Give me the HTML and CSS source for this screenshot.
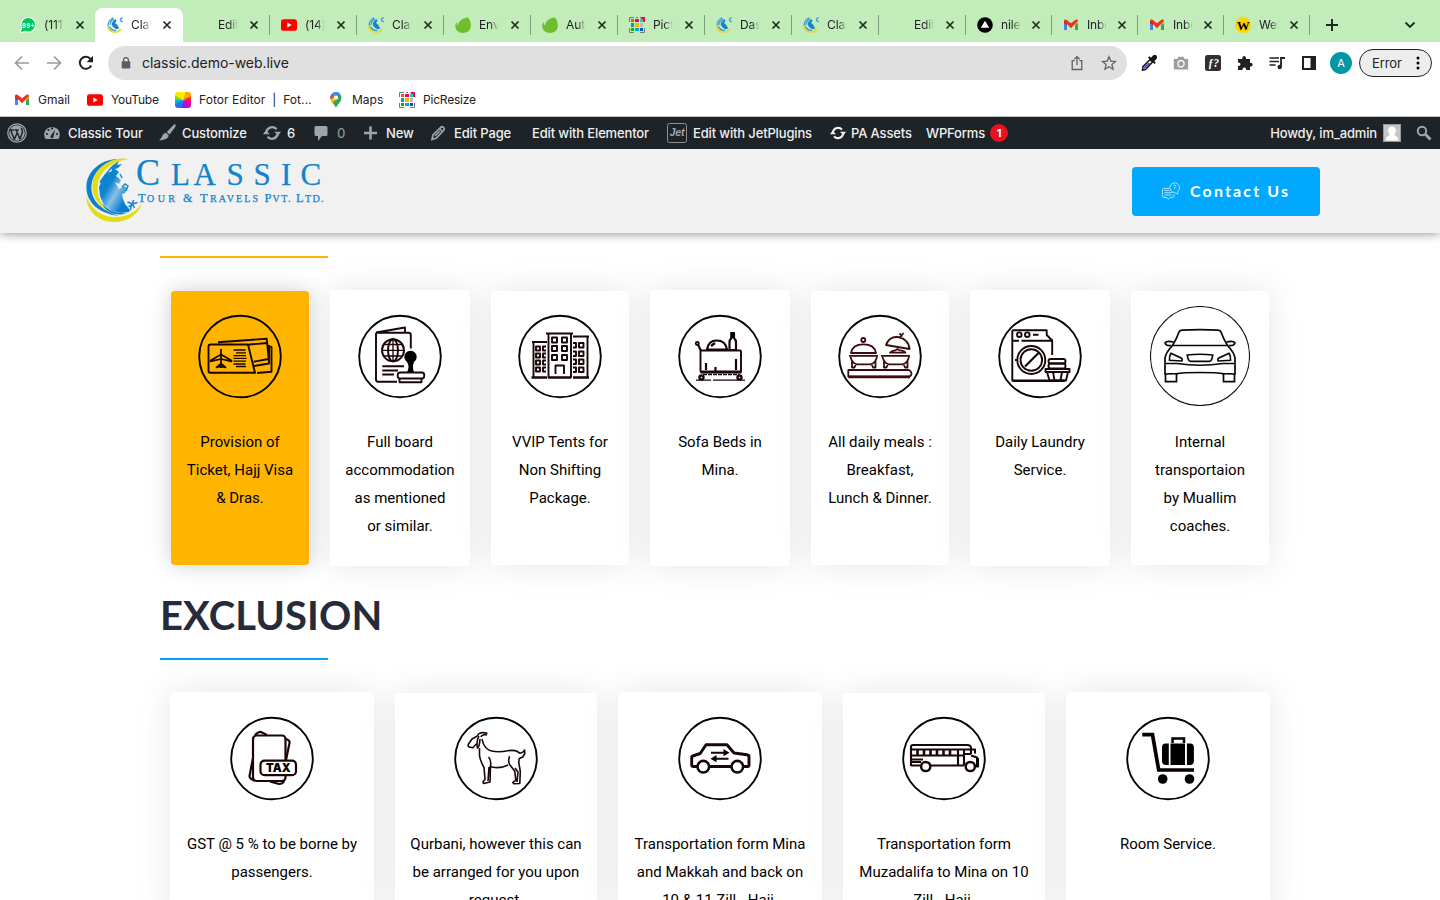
FILE: index.html
```html
<!DOCTYPE html>
<html lang="en">
<head>
<meta charset="utf-8">
<title>Classic Tour &amp; Travels</title>
<link rel="stylesheet" href="styles.css">
</head>
<body>
<svg class="defs" width="0" height="0">
  <defs>
    <linearGradient id="globe" x1="0" y1="0" x2="1" y2="1"><stop offset="0" stop-color="#0a78c8"/><stop offset=".4" stop-color="#0e86d2"/><stop offset=".58" stop-color="#8abfe6"/><stop offset=".8" stop-color="#0a7fd0"/></linearGradient>
    <symbol id="x" viewBox="0 0 10 10"><path d="M1.500 1.500l7 7M8.500 1.500l-7 7" stroke="#1f2a20" stroke-width="1.700"/></symbol>
    <symbol id="fav" viewBox="0 0 16 16"><path d="M6 .8Q.5 4 1.200 9.500M7 1.500Q3 4.500 3 8" fill="none" stroke="#3d9ad8" stroke-width="1.200"/><path d="M.3 8.500Q1.500 15 8 15q4 0 6-3" fill="none" stroke="#e4dc2c" stroke-width="1.800"/><path d="M2.500 9.500Q4 13.500 9 13.300" fill="none" stroke="#2d93d6" stroke-width="1.300"/><path d="M6 4l2.500-2 1 2-1.500 2 2 1.500 2.300 4-3 .8L6 10 4.500 7z" fill="#1684cf"/><path d="M15.800.900c-3-.5-3 3.800 0 3.600" fill="none" stroke="#3a9bd8" stroke-width="1.300"/></symbol>
    <symbol id="yt" viewBox="0 0 16 16"><rect y="2.300" width="16" height="11.500" rx="2.600" fill="#f00"/><path d="M6.300 5.600v4.900L10.700 8z" fill="#fff"/></symbol>
    <symbol id="gm" viewBox="0 0 16 16"><path d="M1 5v8h3V7z" fill="#4285f4"/><path d="M12 7v6h3V5z" fill="#34a853"/><path d="M1 3.800V6l3 2.300V4.700z" fill="#c5221f"/><path d="M15 3.800V6l-3 2.300V4.700z" fill="#fbbc04"/><path d="M1 4c0-1.500 1.500-2 2.500-1.200L8 6.200l4.500-3.400C13.500 2 15 2.500 15 4L8 11.200 1 4z" fill="#ea3323"/></symbol>
    <symbol id="leaf" viewBox="0 0 16 16"><path d="M13 .6c2 2 3.300 6.400 2.700 10C15 14.200 11.500 16 8 16 3 16 .3 12.500.3 9.300c0-2 .7-3.500 1.700-4.300C1.700 7 2.200 8 3 8.500 3 4.500 9 .2 13 .6z" fill="#6fbe2b"/></symbol>
    <symbol id="pic" viewBox="0 0 16 16"><path d="M.5 5V.5H5M5 15.500H.5V11M15.500 11v4.500H11M7 .5h2" fill="none" stroke="#777"/><path d="M2 2h3v3H2z" fill="#ff4d0f"/><path d="M6 2h4v3H6zM11 0h5v5h-1.500z" fill="#f0006c"/><path d="M11 2h3v3h-3z" fill="#3c9"/><path d="M2 6h3v4H2z" fill="#0aa398"/><path d="M6 6h4v4H6z" fill="#ffb400"/><path d="M11 6h3v4h-3z" fill="#bbb"/><path d="M2 11h3v3H2z" fill="#00b30c"/><path d="M6 11h4v3H6z" fill="#00a8e8"/><path d="M11 11h3v3h-3z" fill="#0058b0"/></symbol>
    <symbol id="sync" viewBox="0 0 20 20"><path d="M3.800 8.500A6.500 6.500 0 0 1 15 5.800M16.200 11.500A6.500 6.500 0 0 1 5 14.200" fill="none" stroke="currentColor" stroke-width="2.600"/><path d="M12.500 8.500H20l-3.200 4.500zM7.500 11.500H0L3.200 7z" fill="currentColor"/></symbol>
  </defs>
</svg>

<div class="tabs">
  <div class="tab plain"><svg viewBox="0 0 16 16"><circle cx="8.300" cy="7.700" r="7.800" fill="#fff"/><path d="M0 16l.8-6 5 5z" fill="#fff"/><circle cx="8.300" cy="7.700" r="6.800" fill="#00c853"/><path d="M1 15l1-4.500 3.500 3.500z" fill="#00c853"/><text x="2" y="10.500" textLength="12.500" class="badge99">99+</text></svg><span>(111)</span><svg class="close"><use href="#x"/></svg></div>
  <div class="tab active"><svg><use href="#fav"/></svg><span>Classic</span><svg class="close"><use href="#x"/></svg></div>
  <div class="tab"><svg></svg><span>Edit P</span><svg class="close"><use href="#x"/></svg></div>
  <div class="tab"><svg><use href="#yt"/></svg><span>(14)</span><svg class="close"><use href="#x"/></svg></div>
  <div class="tab"><svg><use href="#fav"/></svg><span>Classic</span><svg class="close"><use href="#x"/></svg></div>
  <div class="tab"><svg><use href="#leaf"/></svg><span>Envato</span><svg class="close"><use href="#x"/></svg></div>
  <div class="tab"><svg><use href="#leaf"/></svg><span>Auto</span><svg class="close"><use href="#x"/></svg></div>
  <div class="tab"><svg><use href="#pic"/></svg><span>Picture</span><svg class="close"><use href="#x"/></svg></div>
  <div class="tab"><svg><use href="#fav"/></svg><span>Dash</span><svg class="close"><use href="#x"/></svg></div>
  <div class="tab"><svg><use href="#fav"/></svg><span>Classic</span><svg class="close"><use href="#x"/></svg></div>
  <div class="tab"><svg></svg><span>Edit P</span><svg class="close"><use href="#x"/></svg></div>
  <div class="tab slim"><svg viewBox="0 0 16 16"><circle cx="8" cy="8" r="7.800"/><path d="M8 3.800l4.200 7H3.800z" fill="#fff"/></svg><span>niles</span><svg class="close"><use href="#x"/></svg></div>
  <div class="tab slim"><svg><use href="#gm"/></svg><span>Inbox</span><svg class="close"><use href="#x"/></svg></div>
  <div class="tab slim"><svg><use href="#gm"/></svg><span>Inbox</span><svg class="close"><use href="#x"/></svg></div>
  <div class="tab slim"><svg viewBox="0 0 16 16"><circle cx="8" cy="8" r="8" fill="#ffd500"/><text x="1.800" y="12.500" textLength="12.400" class="wfav">W</text></svg><span>Web</span><svg class="close"><use href="#x"/></svg></div>
  <svg class="plus" viewBox="0 0 12 12"><path d="M6 0v12M0 6h12" stroke="#1d281e" stroke-width="1.900"/></svg>
  <svg class="chev" viewBox="0 0 12 8"><path d="M1.500 1.500L6 6l4.500-4.500" fill="none" stroke="#1d281e" stroke-width="1.800"/></svg>
</div>

<div class="toolbar">
  <svg class="nav" viewBox="0 0 16 16"><path d="M15 8H2M8 1.500L1.500 8 8 14.500" fill="none" stroke="#9b9b9b" stroke-width="1.700"/></svg>
  <svg class="nav" viewBox="0 0 16 16"><path d="M1 8h13M8 1.500L14.500 8 8 14.500" fill="none" stroke="#9b9b9b" stroke-width="1.700"/></svg>
  <svg class="nav" viewBox="0 0 16 16"><path d="M13.200 10.500A6 6 0 1 1 12.500 4" fill="none" stroke="#1f2023" stroke-width="2"/><path d="M15 .8v6.400H8.600z" fill="#1f2023"/></svg>
  <div class="omnibox">
    <svg class="lock" viewBox="0 0 10 12"><rect x=".7" y="4.200" width="8.600" height="7.300" rx="1" fill="#5a5d61"/><path d="M2.600 5V3a2.400 2.400 0 0 1 4.800 0v2" fill="none" stroke="#5a5d61" stroke-width="1.300"/></svg>
    <span class="url">classic.demo-web.live</span>
    <svg class="obi" viewBox="0 0 16 16"><path d="M5.500 5.700H3.200v8.800h9.600V5.700h-2.300M8 10V2M5.300 4.300L8 1.600l2.700 2.700" fill="none" stroke="#606060" stroke-width="1.300"/></svg>
    <svg class="obi" viewBox="0 0 16 16"><path d="M8 1.800l1.800 4.300 4.700.4-3.600 3.100 1.100 4.600L8 11.700l-4 2.500 1.100-4.600L1.500 6.500l4.700-.4z" fill="none" stroke="#606060" stroke-width="1.300"/></svg>
  </div>
  <div class="exts">
    <svg viewBox="0 0 16 16"><path d="M1.500 15.200l.5-3.500L9 4.500 11.500 7l-7 7.500z" fill="#fff" stroke="#111" stroke-width="1.500"/><path d="M2.500 14l.5-2 4-4h2.500L4 13.500z" fill="#4b52c8"/><path d="M7 2.500L13.500 9l1.300-1.300-1.500-1.500L15.500 4C17 1 15-.8 12 .6L10 2.800 8.300 1.200z" fill="#111"/></svg>
    <svg viewBox="0 0 16 16"><path d="M.8 4h3.400l1.300-2.200h5L11.800 4h3.400v10.500H.8z" fill="#9e9e9e"/><circle cx="8" cy="8.800" r="3.700" fill="#fff"/><circle cx="8" cy="8.800" r="2.500" fill="#9e9e9e"/></svg>
    <svg viewBox="0 0 16 16"><rect width="16" height="16" rx="2.500" fill="#303030"/><text x="3" y="12" textLength="11" lengthAdjust="spacingAndGlyphs" class="fq">ƒ?</text></svg>
    <svg viewBox="0 0 16 16"><path d="M1 4h4.500c-1-4 4-4 3.500 0h4v3.800c3.500-.2 3.500 4 0 3.700V15H9.200c.3-3.500-4-3.500-3.700 0H1v-4c3.300.3 3.300-3.600 0-3.400z" fill="#202124"/></svg>
    <svg viewBox="0 0 16 16"><path d="M.5 3H10M.5 6.500H10M.5 10H6.500" stroke="#202124" stroke-width="1.700"/><path d="M12 12V3h4" fill="none" stroke="#202124" stroke-width="1.800"/><circle cx="10.700" cy="12" r="2.200" fill="#202124"/></svg>
    <svg viewBox="0 0 16 16"><path d="M2 2h12v12H2z" fill="#fff" stroke="#202124" stroke-width="2"/><path d="M9.500 2H14v12H9.500z" fill="#202124"/></svg>
    <span class="avatar">A</span>
  </div>
  <div class="error"><span>Error</span><svg viewBox="0 0 4 14"><circle cx="2" cy="2" r="1.500"/><circle cx="2" cy="7" r="1.500"/><circle cx="2" cy="12" r="1.500"/></svg></div>
</div>

<div class="bookmarks">
  <div><svg><use href="#gm"/></svg><span>Gmail</span></div>
  <div><svg><use href="#yt"/></svg><span class="ytl">YouTube</span></div>
  <div><svg viewBox="0 0 16 16"><clipPath id="fc"><rect width="16" height="16" rx="3"/></clipPath><g clip-path="url(#fc)"><path d="M8 8L-2 4V-2h8z" fill="#ffe600"/><path d="M8 8L5-1h7z" fill="#ffef00"/><path d="M8 8l3-9h6v6z" fill="#ffa800"/><path d="M8 8l9-4v7z" fill="#ff1e3c"/><path d="M8 8l9 2v7h-5z" fill="#e000b8"/><path d="M8 8l5 9H6z" fill="#7a20f0"/><path d="M8 8l-1 9h-8v-5z" fill="#2870f0"/><path d="M8 8l-9 5V8z" fill="#00b4c8"/><path d="M8 8H-1V3z" fill="#70dc00"/></g></svg><span class="fot">Fotor Editor&nbsp; |&nbsp; Fot...</span></div>
  <div><svg viewBox="0 0 16 16"><path d="M8 16c-.5-3-5.500-5.500-5.500-10.500C2.500 2.500 5 0 8 0s5.500 2.500 5.500 5.500C13.500 10.500 8.500 13 8 16z" fill="#34a853"/><path d="M8 0C5 0 2.500 2.500 2.500 5.500L4 9l5-5 3-2.500A5.500 5.500 0 0 0 8 0z" fill="#4285f4"/><path d="M3.600 2L6 5 2.800 7.500A6 6 0 0 1 3.600 2z" fill="#ea4335"/><path d="M10 6.500L4 11 2.900 7.700 6.500 4z" fill="#fbbc04"/><circle cx="8" cy="5.500" r="2" fill="#fff"/></svg><span>Maps</span></div>
  <div><svg><use href="#pic"/></svg><span class="ytl">PicResize</span></div>
</div>

<div class="admin">
  <div><svg viewBox="0 0 20 20"><circle cx="10" cy="10" r="9.200" fill="none" stroke="#a0a5aa" stroke-width="1.300"/><circle cx="10" cy="10" r="7.700" fill="#a0a5aa"/><path d="M3.500 6.800l4 10M9 6.500l4 10M3 7h4M7.500 7h4.200M7.500 16L10.500 9M13 16l2.500-7c.5-2-1.500-2.500-1-4" fill="none" stroke="#1d2327" stroke-width="1.500"/></svg></div>
  <div><svg class="s16" viewBox="0 0 16 16"><path d="M1.500 14A7.800 7.800 0 1 1 14.500 14z" fill="#a0a5aa"/><g fill="#1d2327"><circle cx="3" cy="9" r="1.100"/><circle cx="4.500" cy="5" r="1.100"/><circle cx="8" cy="3.400" r="1.100"/><circle cx="13" cy="9" r="1.100"/><path d="M7 10.500L11 4.500 9.500 11.500a1.500 1.500 0 1 1-2.500-1z"/></g></svg><span>Classic Tour</span></div>
  <div><svg class="s18" viewBox="0 0 18 18"><path d="M17.500.5c.5.500 0 2-1 3.500l-5 6.500-2.700-2.500L15 1.500c1-1 2-1.500 2.500-1zM8 8.700l2.700 2.600C10.500 14 8 16 .8 16.500 4.500 14.500 3.500 9.500 8 8.700z" fill="#a0a5aa"/></svg><span>Customize</span></div>
  <div><svg class="s18"><use href="#sync"/></svg><span>6</span></div>
  <div class="dim"><svg class="s16" viewBox="0 0 16 16"><path d="M3 1h10q1.500 0 1.500 1.500v7Q14.500 11 13 11H9l-4 5v-5H3q-1.500 0-1.500-1.500v-7Q1.500 1 3 1z" fill="#a0a5aa"/></svg><span>0</span></div>
  <div><svg class="s16" viewBox="0 0 16 16"><path d="M8.500 1.500v13M2 8h13" stroke="#a0a5aa" stroke-width="2.600"/></svg><span>New</span></div>
  <div><svg class="s16" viewBox="0 0 16 16"><path d="M2 14.500l1-4.500 7.500-7.500q1.500-1.500 3 0t0 3L6.500 13z" fill="none" stroke="#a0a5aa" stroke-width="1.700"/><path d="M9.500 3.500l3 3M5 11l5-5" stroke="#a0a5aa" stroke-width="1.500"/></svg><span>Edit Page</span></div>
  <div><span>Edit with Elementor</span></div>
  <div><svg viewBox="0 0 20 20"><rect x=".5" y=".5" width="19" height="19" rx="2" fill="none" stroke="#8d9297"/><text x="2.500" y="12.500" textLength="15" lengthAdjust="spacingAndGlyphs" class="jet">Jet</text></svg><span>Edit with JetPlugins</span></div>
  <div class="pa"><svg><use href="#sync"/></svg><span>PA Assets</span></div>
  <div><span>WPForms</span><b>1</b></div>
  <div class="howdy"><span>Howdy, im_admin</span><svg class="s18" viewBox="0 0 18 18"><path d="M0 0h18v18H0z" fill="#c6c6c6"/><path d="M.5.500h17v17H.5z" fill="none" stroke="#999"/><path d="M3 16.500c0-4 1.500-4.500 4-5.500-4-5-1-8.500 2-8.500s6 3.500 2 8.500c2.500 1 4 1.500 4 5.500z" fill="#fff"/></svg><svg class="s16" viewBox="0 0 16 16"><circle cx="6" cy="6" r="4.200" fill="none" stroke="#a0a5aa" stroke-width="2"/><path d="M9 9l5.500 5.500" stroke="#a0a5aa" stroke-width="3"/></svg></div>
</div>

<header>
  <svg class="logo" viewBox="0 0 250 70">
    <path d="M34 3C20 3 5 12 2.500 28 1 44 12 57 35 60 20 55 6 46 7.500 29 9 16 20 7 34 3z" fill="#0c80cf"/>
    <path d="M45 3C30 0 13 9 9 24 6 38 13 49 24 55 15 46 12 36 14.500 25 18 13 30 5 45 3z" fill="#e1dc1c"/>
    <path d="M18 47C24 55 33 58 43 57 33 61 22 57 18 47z" fill="#0c80cf"/>
    <path d="M2 40c5 13 15 21 29 21 13 0 22-6 27-14-3 11-14 19-28 19C15 66 3 56 2 40z" fill="#e0de12"/>
    <path d="M25 13l4-4 6-4-2 4 5-1-4 4-3 1 4 3-3 4 5 4-2 4-4-2 4 7 5-3 3 2-2 5-3 1 1 5 2 5 5 6-1 2-8 1-9-2-8-6-4-9-1-9 2-4-1-2 5-7 7-3-1-3z" fill="url(#globe)"/>
    <path d="M16 27l2-3 1 6-3 3M36 18l2 4M38 31l3-3 3 2-2 5M22 18l5-6" fill="none" stroke="#1686cf" stroke-width="1.400"/>
    <path d="M48.500 48l-5-2M48.500 48l1-4M48.500 48l5-1.500M48.500 48l-4 3M48.500 48l2 4M47.500 48l-1 6" stroke="#1686cf" stroke-width="1.500"/>
    <g class="logotext"><text x="52" y="28.700" font-size="38" textLength="24" lengthAdjust="spacingAndGlyphs">C</text>
    <text x="87 109.500 142.500 169.500 197 216.500" y="28.500" font-size="31">LASSIC</text>
    <text x="54" y="46" font-size="12.500">T</text><text x="63" y="46" font-size="10" textLength="28">OUR</text><text x="99" y="46" font-size="12">&amp;</text><text x="116" y="46" font-size="12.500">T</text><text x="126" y="46" font-size="10" textLength="48">RAVELS</text><text x="180.500" y="46" font-size="12.500">P</text><text x="188.500" y="46" font-size="10" textLength="18">VT.</text><text x="212" y="46" font-size="12.500">L</text><text x="221" y="46" font-size="10" textLength="18.500">TD.</text></g>
  </svg>
  <a class="contact"><svg viewBox="0 0 18 18"><g fill="none" stroke="#b9e8ff" stroke-width=".9"><path d="M7.500 6.500H2q-1.500 0-1.500 1.500v6q0 1.500 1.500 1.500h3l1.500 1.800L8 15.500h2.500q1.500 0 1.500-1.500v-2M2.500 8.500h5M2.500 10.700h8M2.500 13h7"/><path d="M16 9.200A4.800 4.800 0 1 0 12.500 10.500L15.500 12zM11.500 4c.5-1.500 3-1 2.200.5L12.500 6v1"/></g></svg><span>Contact Us</span></a>
</header>

<main>
  <div class="rule gold"></div>
  <div class="row seven">
    <div class="card tight gold-card"><svg viewBox="0 0 100 100"><circle class="ring" cx="50" cy="50.500" r="40.800"/><g class="ln"><path d="M20.500 38.500H58L65 66.800H20.500q-2 0-2-2V40.500q0-2 2-2zM28 36.300L76.700 32.700 78.700 53 63.700 55.700M59 38.500L77.500 37M78 39.500l3.500 1.500V65.700L67 67M64 60l15-2.500v-17"/><path d="M43.500 44h12M46 46.800h10M43.500 49.600h12.500M43.500 52.400h13M43.500 55.200h12.500M43.500 58h12M46 60.500h10" stroke-width="1.300"/><path d="M31 43v19M31 48.500L20.500 54.500v.8L31 53l10.500 2.300v-.8L31 48.500M31 57.500L26.500 61.500 31 60.500l4.500 1z" stroke-width="1.700"/></g></svg><p>Provision of<br>Ticket, Hajj Visa<br>&amp; Dras.</p></div>
    <div class="card"><svg viewBox="0 0 100 100"><circle class="ring" cx="50" cy="50.500" r="40.800"/><g class="ln"><path d="M26 26.700H58.500q2.300 0 2.300 2.300V42.500M26 26.700V73.500q0 2.200 2.200 2.200H47M26 26.500L55 21.500V26"/><circle cx="43" cy="44.300" r="11"/><ellipse cx="43" cy="44.300" rx="5" ry="11"/><path d="M43 33.500v22M32 44.300h22M34 38.500h18M34 50h18" stroke-width="1.300"/><path d="M32.300 60.300H54M32.300 64.500H48M32.300 68.500H44"/><rect x="47.700" y="66.500" width="26.500" height="6" rx="2.500"/><path d="M49.500 73v3.200h22V73"/></g><path d="M57 66q3-5 0-10a6.200 6.200 0 1 1 7 0q-2 5 0 10z"/></svg><p>Full board<br>accommodation<br>as mentioned<br>or similar.</p></div>
    <div class="card tight"><svg viewBox="0 0 100 100"><circle class="ring" cx="50" cy="50.500" r="40.800"/><g class="ln"><path d="M36 27.500h27M38.500 27.500V72M61 27.500V72M22 36h15M23.500 36v36M63 30.500h16M77.500 30.500V72M45.500 68v-8.500h8.500V68"/><path d="M21.500 71.500h15.500M38 71.500h23M63 71.500h16" stroke-width="2.600"/><path d="M42 31.500h5v5h-5zM52 31.500h5v5h-5zM42 40h5v5h-5zM52 40h5v5h-5zM42 49h5v5h-5zM52 49h5v5h-5z"/><path d="M26 40.500h4v4h-4zM26 47.500h4v4h-4zM26 54.500h4v4h-4zM26 61.500h4v4h-4zM36 40.500h-3v4h3M36 47.500h-3v4h3M36 54.500h-3v4h3M36 61.500h-3v4h3M69 37h4.500v4.500H69zM69 45.500h4.500V50H69zM69 53.500h4.500V58H69zM69 61.500h4.500V66H69zM63 37h3v4.500h-3M63 45.500h3V50h-3M63 53.500h3V58h-3M63 61.500h3V66h-3"/></g></svg><p>VVIP Tents for<br>Non Shifting<br>Package.</p></div>
    <div class="card"><svg viewBox="0 0 100 100"><circle class="ring" cx="50" cy="50.500" r="40.800"/><g class="ln"><rect x="30.500" y="44.500" width="40.500" height="21.500" rx="1"/><path d="M31 45L28 38.500M37 43.500C38 37 42 34.500 46.700 34.500S56 37 57 43.500zM41 40l4-3M61.500 27v5q-2 2-2 4v8h6.500v-8q0-2-2-4v-5z" stroke-width="2.200"/><circle cx="27.300" cy="37.500" r="1.500"/><path d="M30.500 66h41" stroke-width="3"/><path d="M33 68.500h36" stroke-dasharray="4 1" stroke-width="1.600"/><path d="M36 57v7M45.500 61v4M66 53v11" stroke-width="2.200"/><circle cx="31.500" cy="71.500" r="2" stroke-width="2.400"/><circle cx="69.500" cy="71.500" r="2" stroke-width="2.400"/><path d="M26 74.200h15M43 74.200h32" stroke-width="1.200"/></g><path d="M60.500 26h4v6h-4z"/></svg><p>Sofa Beds in<br>Mina.</p></div>
    <div class="card tight"><svg viewBox="0 0 100 100"><circle class="ring" cx="50" cy="50.500" r="40.800"/><g class="ln maroon"><circle cx="33.300" cy="34" r="2"/><path d="M21 47C22 41 27 38.300 33.300 38.300S45 41 46 47zM56 39C60 26 79 30 79.500 43zM70 31l2-1.500M69.500 27.500l2 2 2-2.500M60 46.700q2-2 6-2.500 1-2 3 0 5 .5 6.500 2.500z"/><path d="M19 49.800H48M51 49.800H80M20.500 51q2 7 7 7.300H40q5-.3 7-7.300M52.500 51q2 7 7 7.300H72q5-.3 7-7.300M22 55.500V61.500h2.500L26 58M45.500 55.500V61.500H43L41.500 58M54 55.500V61.500h2.500L58 58M77.500 55.500V61.500H75L73.500 58"/><path d="M18.300 64H79q2.500 1.500 2.500 3.700T79 70.500H18.300z"/><path d="M18.300 71H80" stroke-width="2.600"/></g></svg><p>All daily meals :<br>Breakfast,<br>Lunch &amp; Dinner.</p></div>
    <div class="card"><svg viewBox="0 0 100 100"><circle class="ring" cx="50" cy="50.500" r="40.800"/><g class="ln"><path d="M22.300 24.200H56.700V29l5.500 5.500V49M22.300 24.200V75M22.300 34.700H29M31.500 34.700H62M43 28.700h5.500"/><circle cx="29.300" cy="28.700" r="2.300"/><circle cx="37.300" cy="28.700" r="2.300"/><path d="M22.300 74.700H75" stroke-width="2.600"/><circle cx="41.300" cy="54" r="14"/><circle cx="41.300" cy="54" r="10.800"/><path d="M35 60.500l14-14M27 54h-2" stroke-width="2.200"/><rect x="58.500" y="53" width="17" height="4.500" rx="2.200"/><rect x="58.500" y="57.500" width="17" height="5" rx="2.200"/><path d="M55.500 63H79.500V66H55.500zM57 66l2.500 8.500H76L78 66M63 66l1.500 8.500M72 66l-1.500 8.500"/></g></svg><p>Daily Laundry<br>Service.</p></div>
    <div class="card tight"><svg viewBox="0 0 100 100"><circle cx="50" cy="50" r="49.500" fill="none" stroke="#111" stroke-width="1.100"/><g fill="none" stroke="#080808" stroke-width="1.700"><path d="M22.500 39.500Q27 32 29 26q.5-1.500 3-1.800Q50 23 68 24.200q2.500.3 3 1.800 2 6 6.500 13.500zM22.500 39.500Q15.500 47 15 52V68l12-.3Q32 66.500 50 66.500t23 1.200l12 .3V52Q84.500 47 77.500 39.500M15 57.500l12 0Q50 61 73 57.500l12 0M37.300 49q12.700-1.500 25.400 0-.5 5.500-3 6.300H40.300Q37.800 54.500 37.300 49zM21 47.300l10.500 5q1.500 2 0 2.700L19.500 54.300q-.5-4 1.500-7zM79 47.300l-10.500 5q-1.500 2 0 2.700L80.500 54.300q.5-4-1.500-7z"/><path d="M23.500 36q-7-1.500-8.500 1 1.500 3.500 6.500 2.500M76.500 36q7-1.500 8.500 1-1.500 3.500-6.500 2.500M15.500 68v7.700H26.500V67.700M84.500 68v7.700H73.500V67.700"/></g></svg><p>Internal<br>transportaion<br>by Muallim<br>coaches.</p></div>
  </div>
  <h2>EXCLUSION</h2>
  <div class="rule blue"></div>
  <div class="row five">
    <div class="card"><svg viewBox="0 0 100 100"><circle class="ring" cx="50" cy="50.500" r="40.800"/><g class="ln"><path d="M33 27q4-4.500 7-2.500l5 2.500M64 31q4 1 3.500 4L64 52M31 50l-3.500 18q0 3 5 4.500M48 73.500l9 2.500q4 0 5-3" stroke-width="2.200"/><rect x="31" y="27.500" width="32.500" height="45.500" rx="3.500" stroke-width="2.200"/><rect x="38.500" y="52.700" width="35.500" height="14.500" rx="4" fill="#fff" stroke-width="2.200"/></g><text x="44" y="64.300" textLength="24.500" lengthAdjust="spacingAndGlyphs" class="tax">TAX</text></svg><p>GST @ 5 % to be borne by<br>passengers.</p></div>
    <div class="card tight"><svg viewBox="0 0 100 100"><circle class="ring" cx="50" cy="50.500" r="40.800"/><g class="ln thin"><path d="M41.500 25.500q-6-2-9 .5-1 2-2 2.500L26 31l-3.500 5q-1 2.500 1 3l3.500.8q3-4 4.500-4.300M41 27q-5-1-6 2M33 28q-3 5-1.500 12 2-1 2.500-9M36 31l1.500 5q3 6 8 7 8 1.500 16-.3 6-.7 9 .3l3.500 2.200q3-.2 4.500-3.200l.3 3.500-2 3.500-3.500 1.500q-1 4 0 7l1 6-.5 12-6 .3-1-1.500 3-2-1-9-5-6.500q-2-3-.3-8.500M62 57q-8 4-16 2l-2.500-1M42.500 49q3 3 2 9l-.5 16-6.500 1.500-.5-2 2-2-1-12q-4-7-4.500-12L33.500 40M43 59l-1 14M69 60l3 4-1 10"/></g></svg><p>Qurbani, however this can<br>be arranged for you upon<br>request.</p></div>
    <div class="card"><svg viewBox="0 0 100 100"><circle class="ring" cx="50" cy="50.500" r="40.800"/><g class="ln"><path d="M27 58.500h-3.500q-1.800 0-1.800-1.800V49q0-.7 1-1l7.500-2.500L36 36.700H57L64 45l13 1.800q2 .3 2 2V57q0 1.500-1.500 1.500H74M39.500 58.500h21.500" stroke-width="2.900"/><circle cx="33.300" cy="58.700" r="5.800" stroke-width="2.600"/><circle cx="67.300" cy="58.700" r="5.800" stroke-width="2.600"/><path d="M41 44.700h13M45.500 50.700h13"/></g><path d="M53.500 41l6 3.700-6 3.500zM46.500 47l-6 3.700 6 3.500z"/></svg><p>Transportation form Mina<br>and Makkah and back on<br>10 &amp; 11 Zill - Hajj.</p></div>
    <div class="card tight"><svg viewBox="0 0 100 100"><circle class="ring" cx="50" cy="50.500" r="40.800"/><g class="ln"><path d="M17 58V39q0-2 2-2H73q4 0 4 3v6M17 41.500H81v4M17 47.500H69M77 46h-8M17 57.500h9M37 57.500H70M64 42v15.500M70 42v15.500M77 47.500l6 2 1 3v6h-3M17 51.500h12M17 54h10" stroke-width="2.100"/><path d="M23.500 42v5M30 42v5M36.500 42v5M43 42v5M49.500 42v5M56 42v5" stroke-width="2.600"/><circle cx="31.700" cy="58.500" r="4.600" fill="#fff" stroke-width="2.500"/><circle cx="76.300" cy="58.500" r="4.600" fill="#fff" stroke-width="2.500"/></g><path d="M82 50h3v9h-3z"/></svg><p>Transportation form<br>Muzadalifa to Mina on 10<br>Zill - Hajj.</p></div>
    <div class="card"><svg viewBox="0 0 100 100"><circle class="ring" cx="50" cy="50.500" r="40.800"/><path d="M24.300 26.700H34.500L40.700 62H76" fill="none" stroke="#0a0002" stroke-width="3.700"/><path d="M47 35.500h3.800V57H47q-3-.5-3-4V39.500q0-3.500 3-4zM52.500 35.500h14.500V57H52.500zM68.900 35.500H73q2.900.5 2.900 4V53q0 3.500-2.900 4h-4.100z"/><path d="M54.500 35v-4.500h11.500V35" fill="none" stroke="#0a0002" stroke-width="2.500"/><circle cx="44.700" cy="71" r="4.800"/><circle cx="71.500" cy="71" r="4.800"/></svg><p>Room Service.</p></div>
  </div>
</main>
</body>
</html>
```
FILE: styles.css
```css
* { box-sizing: border-box; }
body { margin: 0; width: 1440px; height: 900px; overflow: hidden; background: #fff; font-family: Inter, "Liberation Sans", sans-serif; color: #202124; }
svg { display: block; flex: none; }
.defs { position: absolute; }

.tabs { display: flex; height: 42px; padding: 8px 0 0 9px; background: #c3ecbb; }
.tab { display: flex; align-items: center; width: 87px; height: 34px; padding-left: 11px; background: linear-gradient(#7f9f7a, #7f9f7a) 86px 7px / 1px 20px no-repeat; }
.tab.slim { width: 86px; background-position: 85px 7px; }
.tab.plain { background: none; }
.tab.active { width: 88px; margin-left: -1px; padding-left: 12px; background: #fff; border-radius: 8px 8px 0 0; }
.tab svg { width: 16px; height: 16px; }
.tab span { width: 20px; margin: -2px 11px 0 8px; overflow: hidden; white-space: nowrap; font-size: 12px; letter-spacing: -0.1px; -webkit-mask-image: linear-gradient(90deg, #000 55%, transparent); mask-image: linear-gradient(90deg, #000 55%, transparent); }
.tab .close { width: 10px; height: 10px; }
.tab.slim .close { margin-left: -1px; }
.badge99 { font: 700 6.5px "Liberation Sans", sans-serif; fill: #fff; }
.wfav { font: 700 13px "Liberation Serif", serif; }
.plus { width: 12px; height: 12px; margin: 11px 0 0 16px; }
.chev { width: 12px; height: 8px; margin: 13px 0 0 66px; }

.toolbar { display: flex; align-items: center; height: 42px; padding: 0 8px 0 14px; }
.nav { width: 16px; height: 16px; margin-right: 16px; }
.omnibox { display: flex; align-items: center; width: 1019px; height: 34px; margin-left: -2px; padding: 0 10px 0 13px; border-radius: 17px; background: #e0e0e0; }
.lock { width: 10px; height: 12px; }
.url { flex: 1; margin: -2px 0 0 11px; font-size: 14px; letter-spacing: -0.05px; }
.obi { width: 16px; height: 16px; margin-left: 16px; }
.exts { display: flex; align-items: center; gap: 16px; margin-left: 14px; }
.exts svg { width: 16px; height: 16px; }
.fq { font: italic 700 13px "Liberation Serif", serif; fill: #fff; }
.avatar { width: 22px; height: 22px; margin-left: -3px; border-radius: 50%; background: #0097a7; color: #fff; font-size: 11px; line-height: 22px; text-align: center; }
.error { display: flex; align-items: center; justify-content: space-between; width: 73px; height: 28px; margin-left: 7px; padding: 0 11px 0 12px; border: 1px solid #202124; border-radius: 14px; background: #ededed; font-size: 13px; letter-spacing: -0.1px; }
.error svg { width: 4px; height: 14px; }

.bookmarks { display: grid; grid-template-columns: 73px 88px 153px 71px 100px; height: 33px; padding-left: 14px; border-bottom: 1px solid #c4c4c4; font-size: 12px; }
.bookmarks div { display: flex; align-items: center; gap: 8px; white-space: nowrap; }
.bookmarks svg { width: 16px; height: 16px; }
.bookmarks span { margin-top: -2px; }
.ytl { letter-spacing: -0.2px; }
.fot { letter-spacing: 0.06px; }

.admin { display: grid; grid-template-columns: 37px 114px 105px 50px 49px 68px 102px 135px 163px 96px 200px 1fr; height: 32px; padding-left: 7px; background: #1d2327; color: #f0f0f1; font-size: 13px; font-weight: 500; letter-spacing: -0.15px; }
.admin div { display: flex; align-items: center; gap: 6px; white-space: nowrap; }
.admin svg { width: 20px; height: 20px; color: #a0a5aa; }
.admin .s16 { width: 16px; height: 16px; margin-right: 2px; }
.admin .s18 { width: 18px; height: 18px; }
.admin .pa svg { width: 16px; height: 16px; color: #f0f0f1; }
.admin .pa { gap: 5px; }
.admin .dim { color: #8a8f94; }
.admin b { width: 18px; height: 18px; margin-left: -1px; border-radius: 9px; background: #e8111f; color: #fff; font-size: 11px; line-height: 18px; text-align: center; }
.admin .howdy { justify-content: flex-end; padding-right: 6px; }
.admin .howdy .s16 { margin-left: 9px; }
.jet { font: italic 700 10px "Liberation Sans", sans-serif; fill: #a0a5aa; }

header { position: relative; z-index: 2; display: flex; justify-content: space-between; height: 84px; padding: 7px 120px 0 84px; background: #f1f1f1; box-shadow: 0 0 10px rgba(0, 0, 0, .5); clip-path: inset(0 0 -30px 0); }
.logo { width: 250px; height: 70px; }
.logotext { font-family: "Liberation Serif", serif; fill: #1182cf; stroke: #1182cf; stroke-width: .25; }
.contact { display: flex; align-items: center; width: 188px; height: 49px; margin-top: 11px; padding-left: 30px; border-radius: 4px; background: #00a8ff; color: #fff; font: 700 16px Lato, sans-serif; letter-spacing: 2.15px; }
.contact svg { width: 18px; height: 18px; margin-right: 10px; margin-top: -2px; }
.contact span { margin-top: -3px; white-space: nowrap; }

main { width: 1120px; margin: 0 auto; padding-top: 23px; }
.rule { width: 168px; height: 2px; }
.gold { background: #ffb400; }
.blue { background: #00a3f5; }
.row { display: grid; gap: 20px; padding: 0 10px; margin-top: 32px; }
.seven { grid-template-columns: repeat(7, 140px); height: 276px; }
.five { grid-template-columns: repeat(5, 204px); height: 208px; }
.card { padding-top: 16px; border-radius: 4px; background: #fff; box-shadow: 0 0 35px rgba(0, 0, 0, .1); text-align: center; }
.card.tight { margin: 1px; padding-top: 15px; }
.card.gold-card { background: #ffb400; box-shadow: 0 0 22px rgba(0, 0, 0, .2); }
.card svg { width: 100px; height: 100px; margin: 0 auto; }
.card p { margin: 22px 0 0; font: 15px/28px Roboto, sans-serif; letter-spacing: 0; color: #000; white-space: nowrap; }
.ring { fill: none; stroke: #050505; stroke-width: 1.9; }
.ln { fill: none; stroke: #1a0508; stroke-width: 1.9; stroke-linejoin: round; }
.ln.thin { stroke-width: 1.6; }
.ln.maroon { stroke: #3a0c12; stroke-width: 1.8; }
.tax { font: 900 12px Inter, sans-serif; }
h2 { margin: 19px 0 0; height: 60px; font: 700 40px/60px Lato, sans-serif; letter-spacing: .05px; color: #262b3b; }
h2 + .rule { margin-top: 13px; }
```
